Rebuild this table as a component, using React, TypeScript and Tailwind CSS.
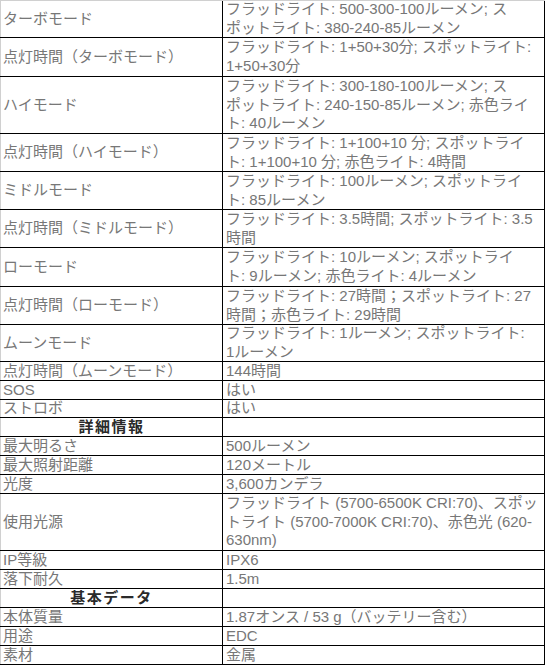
import React from "react";

type Row = { label: string; lines: string[]; h: string; header?: boolean };

const rows: Row[] = [
  { label: "ターボモード", h: "h-[37px]", lines: ["フラッドライト: 500-300-100ルーメン; ス", "ポットライト: 380-240-85ルーメン"] },
  { label: "点灯時間（ターボモード）", h: "h-[39px]", lines: ["フラッドライト: 1+50+30分; スポットライト:", "1+50+30分"] },
  { label: "ハイモード", h: "h-[57px]", lines: ["フラッドライト: 300-180-100ルーメン; ス", "ポットライト: 240-150-85ルーメン; 赤色ライ", "ト: 40ルーメン"] },
  { label: "点灯時間（ハイモード）", h: "h-[38px]", lines: ["フラッドライト: 1+100+10 分; スポットライ", "ト: 1+100+10 分; 赤色ライト: 4時間"] },
  { label: "ミドルモード", h: "h-[38px]", lines: ["フラッドライト: 100ルーメン; スポットライ", "ト: 85ルーメン"] },
  { label: "点灯時間（ミドルモード）", h: "h-[38px]", lines: ["フラッドライト: 3.5時間; スポットライト: 3.5", "時間"] },
  { label: "ローモード", h: "h-[39px]", lines: ["フラッドライト: 10ルーメン; スポットライ", "ト: 9ルーメン; 赤色ライト: 4ルーメン"] },
  { label: "点灯時間（ローモード）", h: "h-[38px]", lines: ["フラッドライト: 27時間；スポットライト: 27", "時間；赤色ライト: 29時間"] },
  { label: "ムーンモード", h: "h-[37px]", lines: ["フラッドライト: 1ルーメン; スポットライト:", "1ルーメン"] },
  { label: "点灯時間（ムーンモード）", h: "h-[19px]", lines: ["144時間"] },
  { label: "SOS", h: "h-[19px]", lines: ["はい"] },
  { label: "ストロボ", h: "h-[18px]", lines: ["はい"] },
  { label: "詳細情報", h: "h-[19px]", lines: [""], header: true },
  { label: "最大明るさ", h: "h-[19px]", lines: ["500ルーメン"] },
  { label: "最大照射距離", h: "h-[19px]", lines: ["120メートル"] },
  { label: "光度", h: "h-[19px]", lines: ["3,600カンデラ"] },
  { label: "使用光源", h: "h-[57px]", lines: ["フラッドライト (5700-6500K CRI:70)、スポッ", "トライト (5700-7000K CRI:70)、赤色光 (620-", "630nm)"] },
  { label: "IP等級", h: "h-[19px]", lines: ["IPX6"] },
  { label: "落下耐久", h: "h-[19px]", lines: ["1.5m"] },
  { label: "基本データ", h: "h-[19px]", lines: [""], header: true },
  { label: "本体質量", h: "h-[19px]", lines: ["1.87オンス / 53 g（バッテリー含む）"] },
  { label: "用途", h: "h-[19px]", lines: ["EDC"] },
  { label: "素材", h: "h-[19px]", lines: ["金属"] },
];

export default function App() {
  return (
    <div
      className="bg-white w-[547px] h-[668px] overflow-hidden text-[15px] leading-[18.7px] text-[#777]"
      style={{ fontFamily: '"Liberation Sans", "Noto Sans CJK JP", Arial, sans-serif' }}
    >
      <div className="w-[545px] border-t border-[#d0d0d0]">
        {rows.map((r, i) => (
          <div key={i} className={`flex border-b border-black ${r.h}`}>
            <div
              className={
                r.header
                  ? "w-[222px] shrink-0 border-l border-[#d0d0d0] flex items-center justify-center font-bold text-[#2a2a2a] tracking-[1.5px]"
                  : "w-[222px] shrink-0 border-l border-[#d0d0d0] pl-[2px] flex items-center whitespace-nowrap"
              }
            >
              {r.label}
            </div>
            <div className="w-[323px] shrink-0 border-l border-r border-black pl-[3px] whitespace-nowrap overflow-hidden flex flex-col justify-center">
              {r.lines.map((l, j) => (
                <div key={j} className="h-[18.7px] shrink-0">
                  {l}
                </div>
              ))}
            </div>
          </div>
        ))}
      </div>
    </div>
  );
}
